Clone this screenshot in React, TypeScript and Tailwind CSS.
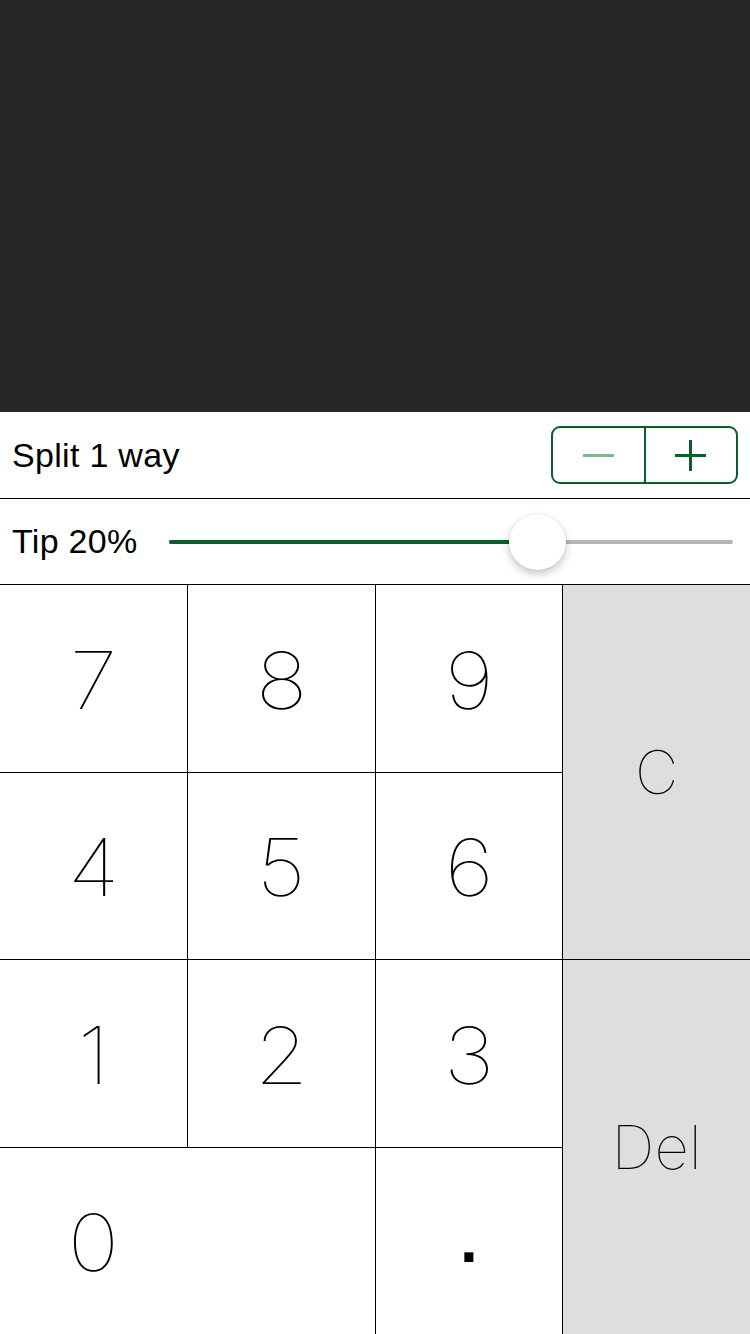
import React from "react";

const digitFont = { fontFamily: "Inter, Roboto, 'Liberation Sans', sans-serif" };

function Key({ label, className = "", textClass = "text-[79px] relative top-[2px] scale-x-[1.1]" }: { label: string; className?: string; textClass?: string }) {
  return (
    <div className={`flex items-center justify-center bg-white ${className}`}>
      <span className={`${textClass} inline-block font-thin leading-none text-black`} style={digitFont}>
        {label}
      </span>
    </div>
  );
}

export default function App() {
  return (
    <div className="w-[750px] h-[1334px] flex flex-col bg-white overflow-hidden">
      <div className="h-[412px] bg-[#262626] shrink-0" />
      <div className="h-[87px] shrink-0 flex items-center justify-between pl-3 pr-3 border-b border-black">
        <span className="text-[34px] tracking-[0.3px] text-black font-['Liberation_Sans',Arial,sans-serif]">Split 1 way</span>
        <div className="w-[187px] h-[58px] border-2 border-[#0b5e2c] rounded-[9px] flex">
          <div className="flex-1 flex items-center justify-center border-r-2 border-[#0b5e2c]">
            <div className="w-[31px] h-[3px] bg-[#86b596]" />
          </div>
          <div className="flex-1 flex items-center justify-center">
            <div className="relative w-[31px] h-[31px]">
              <div className="absolute left-0 top-[14px] w-[31px] h-[3px] bg-[#0b5e2c]" />
              <div className="absolute top-0 left-[14px] h-[31px] w-[3px] bg-[#0b5e2c]" />
            </div>
          </div>
        </div>
      </div>
      <div className="h-[86px] shrink-0 flex items-center pl-3 pr-[17px] border-b border-black">
        <span className="text-[34px] tracking-[0.3px] text-black font-['Liberation_Sans',Arial,sans-serif] w-[157px] shrink-0">Tip 20%</span>
        <div className="relative flex-1 h-[56px] flex items-center">
          <div className="w-full h-[4px] rounded-full bg-[#b5b5b5]" />
          <div className="absolute left-0 top-[26px] w-[345px] h-[4px] rounded-full bg-[#0b5e2c]" />
          <div className="absolute left-[340px] top-0 w-[57px] h-[56px] rounded-full bg-white shadow-[0_4px_8px_rgba(0,0,0,0.22),0_0_0_0.5px_rgba(0,0,0,0.08)]" />
        </div>
      </div>
      <div className="flex-1 grid grid-cols-4 grid-rows-4 gap-px bg-black">
        <Key label="7" />
        <Key label="8" />
        <Key label="9" />
        <Key label="C" className="row-span-2 !bg-[#dedede]" textClass="text-[60px]" />
        <Key label="4" />
        <Key label="5" />
        <Key label="6" />
        <Key label="1" />
        <Key label="2" />
        <Key label="3" />
        <Key label="Del" className="row-span-2 !bg-[#dedede]" textClass="text-[60px]" />
        <div className="col-span-2 bg-white grid grid-cols-2">
          <div className="flex items-center justify-center">
            <span className="text-[79px] relative top-[2px] scale-x-[1.1] inline-block font-thin leading-none text-black" style={digitFont}>0</span>
          </div>
          <div />
        </div>
        <div className="flex items-center justify-center bg-white">
          <span className="text-[64px] font-bold leading-none text-black relative -top-[1px] font-['Liberation_Sans',Arial,sans-serif]">.</span>
        </div>
      </div>
    </div>
  );
}
